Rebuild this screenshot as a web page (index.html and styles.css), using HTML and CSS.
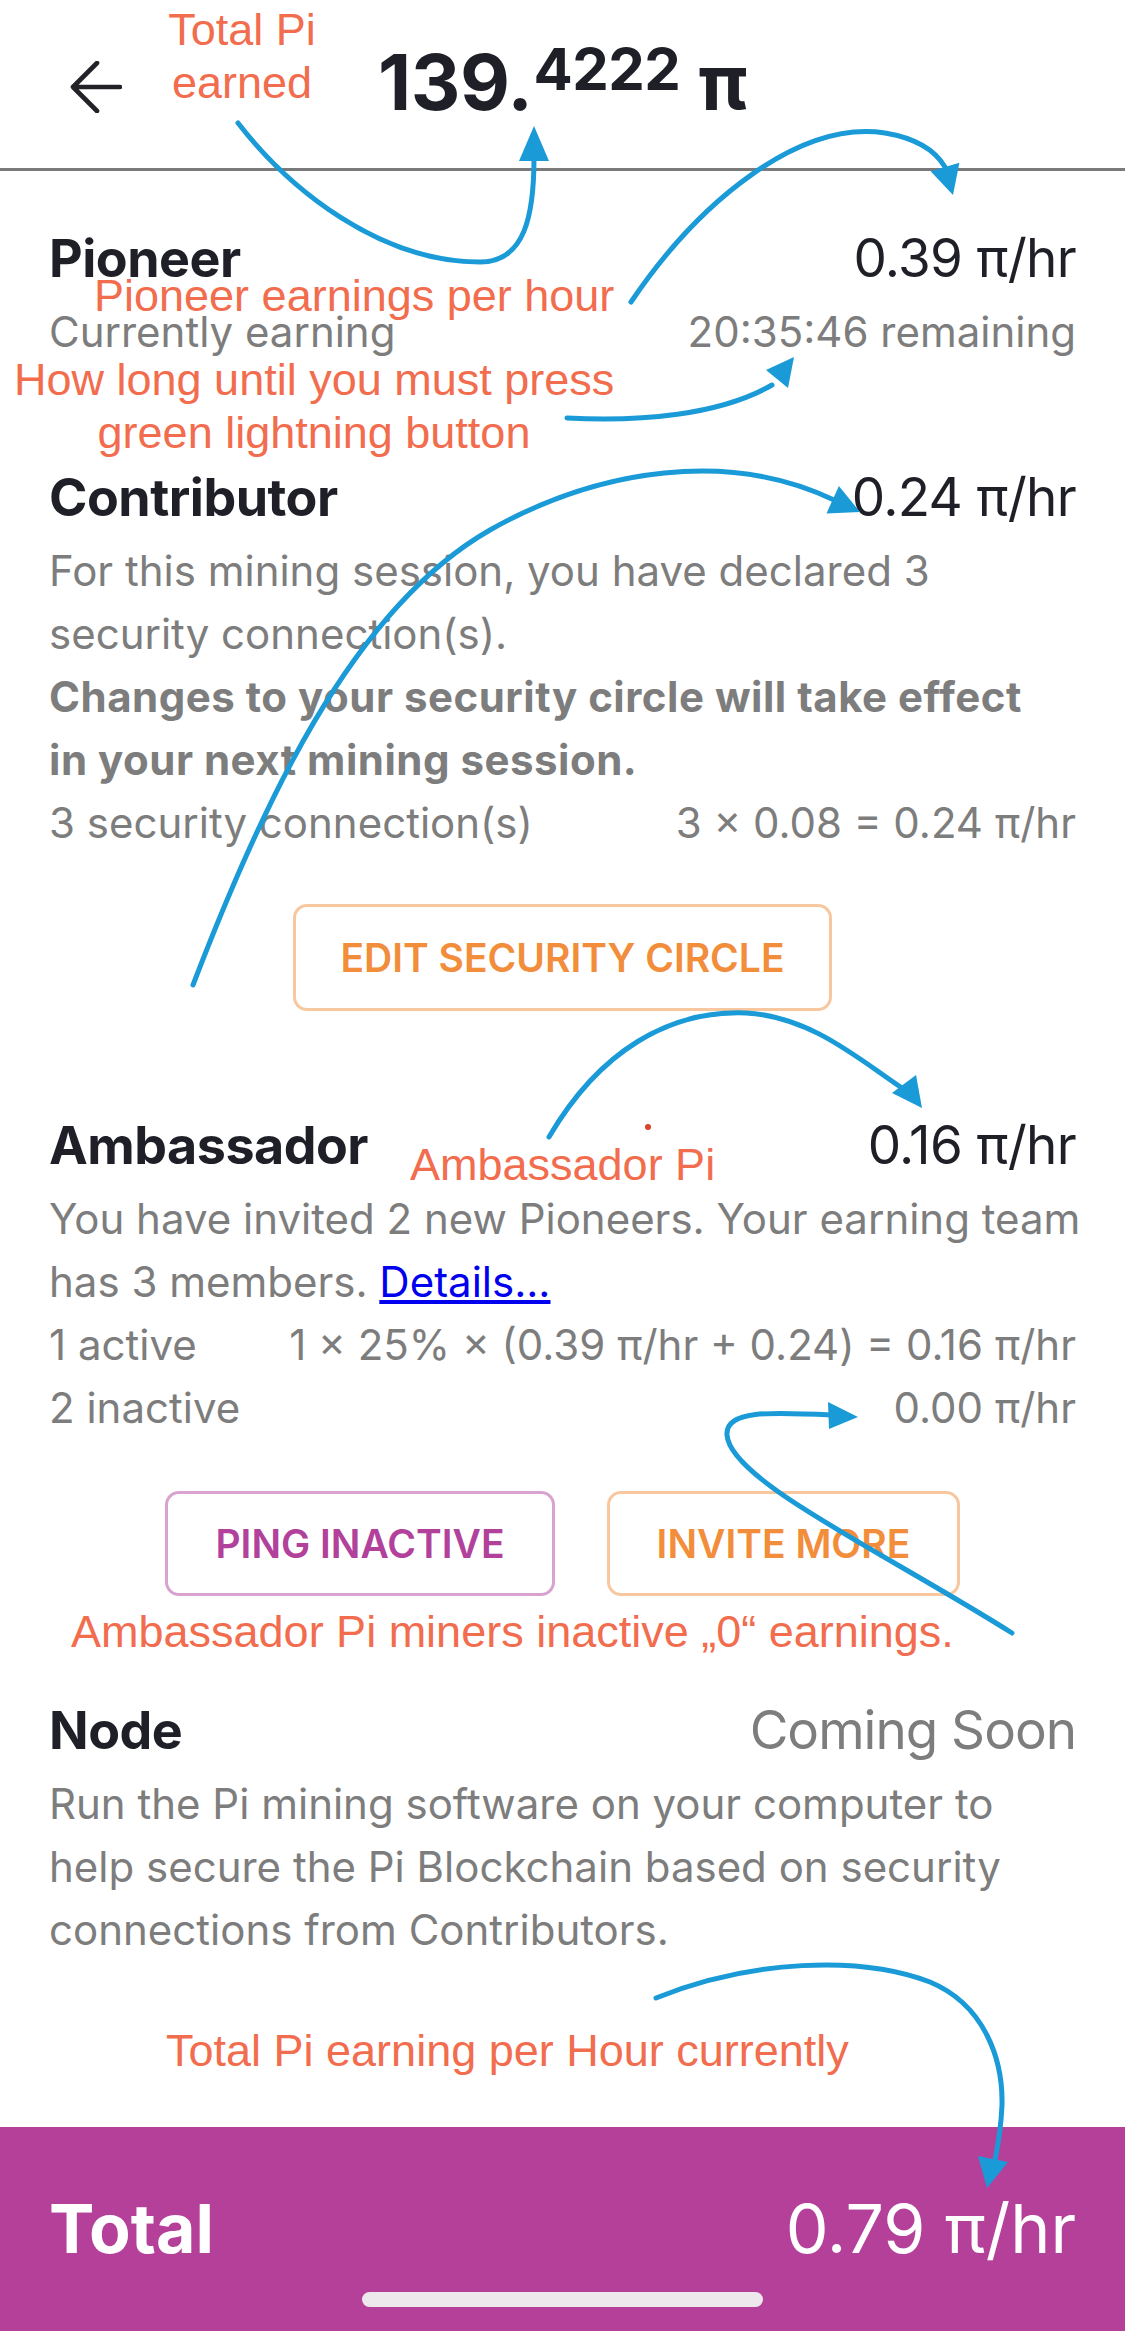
FILE: index.html
```html
<!DOCTYPE html>
<html lang="en">
<head>
<meta charset="utf-8">
<title>Mining rate</title>
<link rel="stylesheet" href="styles.css">
</head>
<body>
<div class="page">
  <header class="topbar">
    <div class="back">
      <svg viewBox="0 0 52 52" aria-hidden="true"><path d="M50 26 H3 M27 2 L3 26 L27 50" fill="none" stroke="#222228" stroke-width="4.6" stroke-linecap="round" stroke-linejoin="round"/></svg>
    </div>
    <div class="balance"><span class="int">139.</span><span class="dec">4222</span><span class="pi">π</span></div>
    <div></div>
  </header>

  <main class="content">
    <section class="block">
      <div class="row title-row"><h2>Pioneer</h2><span class="rate">0.39 π/hr</span></div>
      <div class="row text-row"><span>Currently earning</span><span>20:35:46 remaining</span></div>
    </section>

    <section class="block">
      <div class="row title-row"><h2>Contributor</h2><span class="rate">0.24 π/hr</span></div>
      <p class="desc">For this mining session, you have declared 3<br>security connection(s).</p>
      <p class="desc strong">Changes to your security circle will take effect<br>in your next mining session.</p>
      <div class="row text-row"><span>3 security connection(s)</span><span>3 × 0.08 = 0.24 π/hr</span></div>
      <div class="actions"><button class="btn btn-orange btn-edit">EDIT SECURITY CIRCLE</button></div>
    </section>

    <section class="block">
      <div class="row title-row"><h2>Ambassador</h2><span class="rate">0.16 π/hr</span></div>
      <p class="desc">You have invited 2 new Pioneers. Your earning team<br>has 3 members. <a href="#">Details...</a></p>
      <div class="row text-row"><span>1 active</span><span>1 × 25% × (0.39 π/hr + 0.24) = 0.16 π/hr</span></div>
      <div class="row text-row"><span>2 inactive</span><span>0.00 π/hr</span></div>
      <div class="actions actions-pair">
        <button class="btn btn-purple btn-ping">PING INACTIVE</button>
        <button class="btn btn-orange btn-invite">INVITE MORE</button>
      </div>
    </section>

    <section class="block">
      <div class="row title-row"><h2>Node</h2><span class="rate soon">Coming Soon</span></div>
      <p class="desc">Run the Pi mining software on your computer to<br>help secure the Pi Blockchain based on security<br>connections from Contributors.</p>
    </section>
  </main>

  <footer class="total-bar">
    <div class="total-row"><strong>Total</strong><span>0.79 π/hr</span></div>
    <div class="home-indicator"></div>
  </footer>

  <div class="notes">
    <div class="note note-total">Total Pi<br>earned</div>
    <div class="note note-pioneer">Pioneer earnings per hour</div>
    <div class="note note-howlong">How long until you must press<br>green lightning button</div>
    <div class="note note-amb">Ambassador Pi</div>
    <div class="note note-inactive">Ambassador Pi miners inactive „0“ earnings.</div>
    <div class="note note-totalhr">Total Pi earning per Hour currently</div>
    <svg class="arrows" viewBox="0 0 1125 2331" aria-hidden="true">
      <g fill="none" stroke="#1a9ad7" stroke-width="5" stroke-linecap="round">
        <path d="M238,123 C 290,190 380,262 480,262 C 525,262 534,215 534,158"/>
        <path d="M631,302 C 700,200 800,120 885,133 C 915,138 935,150 945,167"/>
        <path d="M567,418 C 640,422 720,415 772,385"/>
        <path d="M193,985 C 260,810 350,610 490,530 C 600,468 730,450 834,500"/>
        <path d="M549,1137 C 600,1050 670,1010 746,1013 C 810,1016 860,1060 902,1088"/>
        <path d="M1012,1633 C 880,1550 730,1480 727,1435 C 725,1410 770,1412 832,1415"/>
        <path d="M656,1998 C 750,1960 860,1955 930,1982 C 985,2005 1003,2060 1002,2105 C 1001,2130 998,2145 995,2160"/>
      </g>
      <g fill="#1a9ad7">
        <polygon points="534,126 519,161 549,161"/>
        <polygon points="953,195 930.6,171.3 959.4,162.7"/>
        <polygon points="794,357 788,388 766,370"/>
        <polygon points="860,512 826.5,513.4 838.9,486"/>
        <polygon points="922,1108 916,1075 892,1093"/>
        <polygon points="858,1417 828,1402 829,1429"/>
        <polygon points="987,2188 978,2156 1008,2162"/>
      </g>
      <circle cx="648" cy="1127" r="3" fill="#d6432b"/>
    </svg>
  </div>
</div>
</body>
</html>
```

FILE: styles.css
```css
* {
  box-sizing: border-box;
  margin: 0;
  padding: 0;
}

html, body {
  width: 1125px;
  height: 2331px;
}

body {
  font-family: Inter, "Noto Sans", sans-serif;
  background: #ffffff;
  color: #1f1f28;
  overflow: hidden;
}

.page {
  position: relative;
  width: 1125px;
  height: 2331px;
  display: flex;
  flex-direction: column;
}

/* header */
.topbar {
  height: 171px;
  flex: none;
  border-bottom: 3px solid #7a7a7a;
  display: grid;
  grid-template-columns: 1fr auto 1fr;
  align-items: start;
}

.back {
  padding: 61px 0 0 70px;
}

.back svg {
  display: block;
  width: 52px;
  height: 52px;
}

.balance {
  padding-top: 42px;
  font-size: 77px;
  font-weight: 700;
  line-height: 80px;
  white-space: nowrap;
  color: #1f1f28;
  letter-spacing: -0.5px;
}

.balance .dec {
  font-size: 58px;
  line-height: 0;
  vertical-align: 20px;
  margin-left: 1px;
}

.balance .pi {
  margin-left: 18px;
}

/* content */
.content {
  flex: 1;
  padding: 51px 49px 0;
}

.block + .block {
  margin-top: 98px;
}

.row {
  display: flex;
  justify-content: space-between;
  align-items: baseline;
  white-space: nowrap;
}

.title-row {
  font-size: 53px;
  line-height: 72px;
  color: #1f1f28;
}

.title-row h2 {
  font-size: 52px;
  font-weight: 700;
  letter-spacing: -0.5px;
}

.rate {
  font-weight: 400;
  letter-spacing: -0.7px;
}

.rate.soon {
  color: #7d7d7d;
  letter-spacing: -1px;
}

.text-row,
.desc {
  font-size: 42px;
  line-height: 63px;
  color: #7d7d7d;
  white-space: nowrap;
}

.title-row + * {
  margin-top: 5px;
}

.desc.strong {
  font-weight: 700;
  letter-spacing: 0.5px;
}

.desc a {
  color: #0000ee;
  text-decoration: underline;
}

/* buttons */
.actions {
  display: flex;
  justify-content: center;
  gap: 52px;
  margin-top: 50px;
}

.actions-pair {
  margin-top: 52px;
}

.btn {
  height: 107px;
  border: 3px solid;
  border-radius: 14px;
  background: #ffffff;
  font-family: Inter, "Noto Sans", sans-serif;
  font-size: 39px;
  font-weight: 600;
  display: flex;
  align-items: center;
  justify-content: center;
}

.btn-orange {
  border-color: #f7c8a0;
  color: #f28d3b;
}

.btn-purple {
  border-color: #d8a3cf;
  color: #b1419b;
}

.btn-edit {
  width: 539px;
}

.btn-ping {
  width: 390px;
  height: 105px;
}

.btn-invite {
  width: 353px;
  height: 105px;
}

/* footer */
.total-bar {
  flex: none;
  height: 204px;
  background: #b4409a;
  color: #ffffff;
  padding: 59px 49px 0;
}

.total-row {
  display: flex;
  justify-content: space-between;
  align-items: baseline;
  font-size: 68px;
  line-height: 84px;
}

.total-row strong {
  font-weight: 700;
}

.home-indicator {
  width: 401px;
  height: 15px;
  border-radius: 8px;
  background: #ece8ec;
  margin: 22px auto 0;
}

/* annotations layered over the screenshot */
.notes {
  position: absolute;
  inset: 0;
  pointer-events: none;
}

.arrows {
  position: absolute;
  left: 0;
  top: 0;
  width: 1125px;
  height: 2331px;
}

.note {
  position: absolute;
  font-family: "Liberation Sans", Arial, sans-serif;
  font-size: 45px;
  line-height: 53px;
  color: #f26c4e;
  white-space: nowrap;
}

.note-total {
  left: 160px;
  top: 3px;
  width: 164px;
  text-align: center;
}

.note-pioneer {
  left: 94px;
  top: 269px;
}

.note-howlong {
  left: 14px;
  top: 353px;
  width: 600px;
  text-align: center;
}

.note-amb {
  left: 410px;
  top: 1138px;
}

.note-inactive {
  left: 71px;
  top: 1605px;
}

.note-totalhr {
  left: 166px;
  top: 2024px;
}
```
